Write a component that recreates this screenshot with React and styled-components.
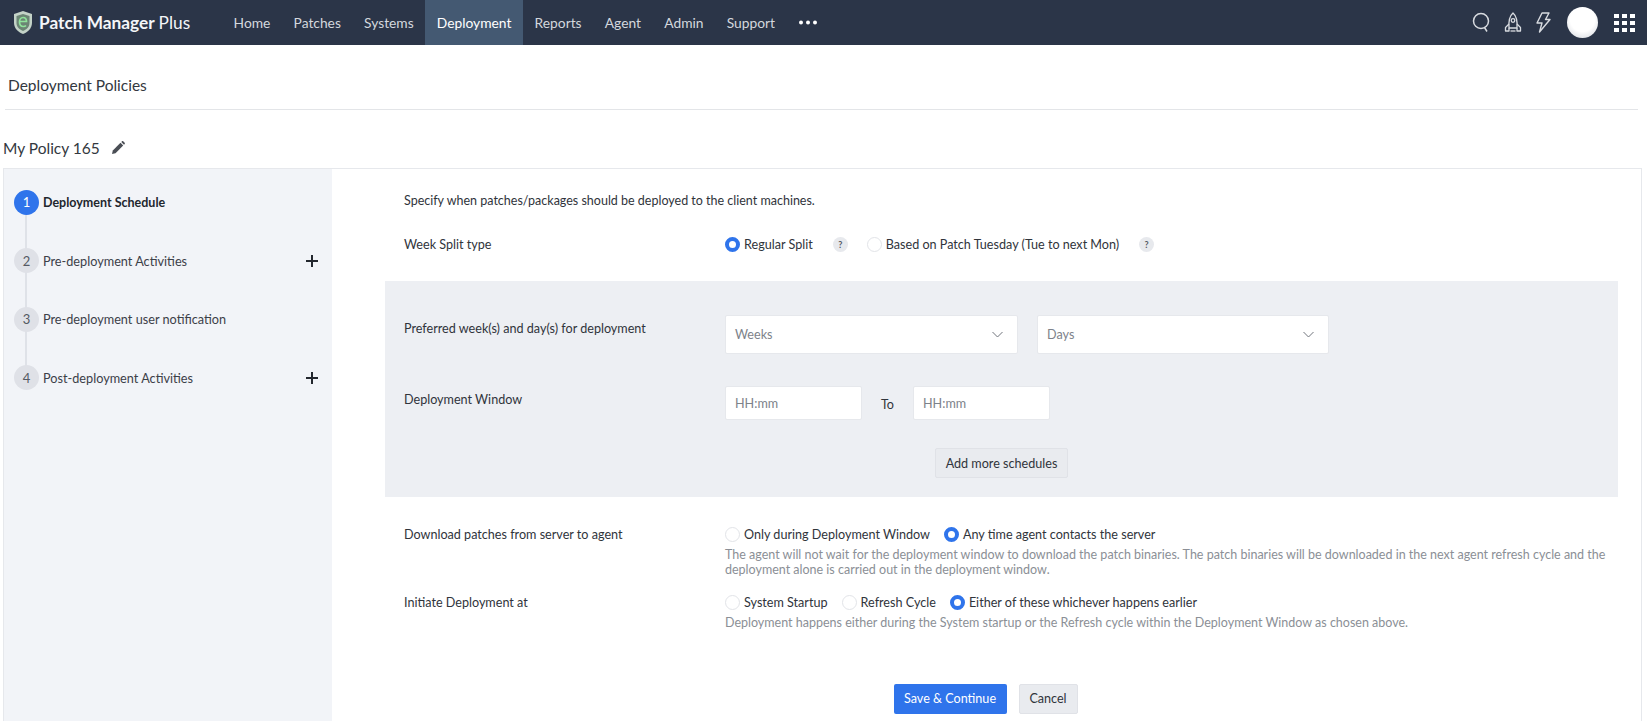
import React from "react";
import styled, { createGlobalStyle } from "styled-components";

const GlobalStyle = createGlobalStyle`
	html, body {
		margin: 0;
		height: 721px;
		overflow: hidden;
		background: #fff;
		font-family: Lato, "Liberation Sans", sans-serif;
		color: #2b2f36;
	}
`;

const TopBar = styled.header`
	height: 45px;
	background: #2b3548;
	display: flex;
	align-items: stretch;
	color: #e6e9ee;
`;

const Brand = styled.div`
	display: flex;
	align-items: center;
	gap: 6px;
	width: 222px;
	padding-left: 13px;
	box-sizing: border-box;
	font-size: 17.3px;
	font-weight: 700;
	color: #f4f6f8;
	span { font-weight: 400; }
`;

const NavItem = styled.div`
	display: flex;
	align-items: center;
	padding: 0 11.6px;
	font-size: 13.8px;
	color: ${p => p.$active ? "#fff" : "#d4d8de"};
	background: ${p => p.$active ? "#445972" : "transparent"};
`;

const TopIcons = styled.div`
	margin-left: auto;
	display: flex;
	align-items: center;
	gap: 13px;
	padding-right: 12px;
`;

const Avatar = styled.div`
	width: 31px;
	height: 31px;
	border-radius: 50%;
	background: radial-gradient(circle at 50% 40%, #fff 50%, #cfd3da 100%);
	margin: 0 3px 0 3px;
`;

const PageTitle = styled.div`
	margin: 0 9px 0 5px;
	padding: 16px 0 0 3px;
	height: 65px;
	display: flex;
	align-items: center;
	font-size: 15.5px;
	color: #333840;
	border-bottom: 1px solid #e3e5e8;
	box-sizing: border-box;
`;

const PolicyRow = styled.div`
	display: flex;
	align-items: center;
	gap: 11px;
	height: 58px;
	padding: 17px 0 0 3px;
	box-sizing: border-box;
	font-size: 15.5px;
	color: #333840;
`;

const Card = styled.div`
	margin: 0 5px 0 3px;
	height: 560px;
	border: 1px solid #e6e8ec;
	border-bottom: 0;
	display: flex;
`;

const Steps = styled.aside`
	width: 328px;
	flex: none;
	background: #f2f4f8;
	padding-top: 4px;
	box-sizing: border-box;
	display: flex;
	flex-direction: column;
`;

const Step = styled.div`
	height: 58.5px;
	display: flex;
	align-items: center;
	padding-left: 10px;
	gap: 4px;
	font-size: ${p => p.$active ? 12.5 : 12.7}px;
	font-weight: ${p => p.$active ? 700 : 400};
	color: ${p => p.$active ? "#23272e" : "#3c4048"};
	position: relative;
	&:not(:last-child)::after {
		content: "";
		position: absolute;
		left: 21px;
		top: 40px;
		height: 40px;
		width: 2px;
		background: #dfe2e8;
	}
`;

const StepNo = styled.div`
	width: 25px;
	height: 25px;
	border-radius: 50%;
	flex: none;
	display: flex;
	align-items: center;
	justify-content: center;
	font-size: 13px;
	font-weight: 400;
	position: relative;
	z-index: 1;
	color: ${p => p.$active ? "#fff" : "#555a63"};
	background: ${p => p.$active ? "#2f74eb" : "#dfe1e7"};
`;

const Plus = styled.svg`
	margin-left: auto;
	margin-right: 14px;
	width: 12px;
	height: 12px;
`;

const Content = styled.main`
	flex: 1;
	min-width: 0;
	padding-top: 23px;
`;

const Intro = styled.div`
	margin-left: 72px;
	font-size: 12.5px;
	height: 18px;
	line-height: 18px;
	color: #30343b;
`;

const Row = styled.div`
	display: flex;
	padding-left: 72px;
	font-size: 12.6px;
	color: #30343b;
	margin-top: ${p => p.$top || 0}px;
`;

const Label = styled.div`
	width: 321px;
	flex: none;
	line-height: 18px;
	padding-top: 1px;
`;

const Radios = styled.div`
	display: flex;
	align-items: center;
	height: 18px;
`;

const RadioWrap = styled.div`
	display: flex;
	align-items: center;
	gap: 4px;
	margin-right: ${p => p.$gap || 14}px;
	white-space: nowrap;
`;

const RadioDot = styled.div`
	width: 15px;
	height: 15px;
	border-radius: 50%;
	box-sizing: border-box;
	flex: none;
	background: #fff;
	border: ${p => p.$on ? "4px solid #2f74eb" : "1px solid #e2e4e8"};
`;

const Help = styled.div`
	width: 15px;
	height: 15px;
	border-radius: 50%;
	background: #e7e9ed;
	font-size: 9px;
	font-weight: 700;
	color: #555a63;
	display: flex;
	align-items: center;
	justify-content: center;
	margin-right: 19px;
`;

const Panel = styled.section`
	margin: 27px 0 0 53px;
	width: 1233px;
	height: 216px;
	background: #edeff3;
	padding: 34px 0 0 19px;
	box-sizing: border-box;
`;

const PanelRow = styled.div`
	display: flex;
	font-size: 12.6px;
	color: #30343b;
	margin-top: ${p => p.$top || 0}px;
`;

const PanelLabel = styled(Label)`
	padding-top: 5px;
`;

const Field = styled.div`
	width: ${p => p.$w}px;
	height: ${p => p.$h}px;
	background: #fff;
	border: 1px solid #e6e8ec;
	border-radius: 2px;
	box-sizing: border-box;
	display: flex;
	align-items: center;
	justify-content: space-between;
	padding: 0 14px 0 9px;
	color: #7d828a;
	font-size: 12.6px;
	margin-right: ${p => p.$gap || 0}px;
`;

const ToText = styled.div`
	width: 51px;
	text-align: center;
	align-self: center;
	color: #30343b;
	padding-top: 3px;
`;

const Ghost = styled.button`
	font: inherit;
	font-size: 12.6px;
	height: 30px;
	color: #30343b;
	background: #e9ebef;
	border: 1px solid #e0e2e7;
	border-radius: 2px;
	padding: 0;
	width: ${p => p.$w}px;
`;

const PanelAction = styled.div`
	margin: 28px 0 0 531px;
`;

const Note = styled.div`
	margin-top: 5px;
	width: 890px;
	font-size: 12.5px;
	line-height: 14.5px;
	color: #8b8f96;
`;

const Actions = styled.div`
	margin-top: 53px;
	padding-right: 2px;
	display: flex;
	justify-content: center;
	gap: 12px;
`;

const Primary = styled.button`
	font: inherit;
	font-size: 12.6px;
	width: 113px;
	height: 30px;
	color: #fff;
	background: #2f74eb;
	border: 0;
	border-radius: 2px;
	padding: 0;
`;

const NAV = [ "Home", "Patches", "Systems", "Deployment", "Reports", "Agent", "Admin", "Support" ];

const STEPS = [
	{ label: "Deployment Schedule", active: true },
	{ label: "Pre-deployment Activities", plus: true },
	{ label: "Pre-deployment user notification" },
	{ label: "Post-deployment Activities", plus: true }
];

const Shield = () =>
	<svg width="20" height="25" viewBox="0 0 20 25">
		<path d="M10 1 L19 4 V13 C19 18 15 22 10 24 C5 22 1 18 1 13 V4 Z" fill="#c3d2c7" />
		<path d="M10 4 L16.5 6 V13 C16.5 16.5 14 19.5 10 21 C6 19.5 3.5 16.5 3.5 13 V6 Z" fill="#6b8474" />
		<path d="M6.5 11.5 H13.5 C13.5 9 12 7.5 10 7.5 C8 7.5 6.5 9.5 6.5 12 C6.5 15 8.5 16.5 10.5 16.5 C11.5 16.5 12.5 16 13 15.5" fill="none" stroke="#8fe39b" strokeWidth="1.7" />
	</svg>;

const Dots = () =>
	<svg width="20" height="5" viewBox="0 0 20 5">
		<circle cx="3" cy="2.5" r="2" fill="#fff" />
		<circle cx="10" cy="2.5" r="2" fill="#fff" />
		<circle cx="17" cy="2.5" r="2" fill="#fff" />
	</svg>;

const SearchIcon = () =>
	<svg width="19" height="21" viewBox="0 0 19 21" fill="none" stroke="#d8dbe0" strokeWidth="1.5">
		<circle cx="9" cy="9" r="7.5" />
		<path d="M12.5 15.5 L15 19.5" />
	</svg>;

const RocketIcon = () =>
	<svg width="18" height="22" viewBox="0 0 18 22" fill="none" stroke="#d8dbe0" strokeWidth="1.3" strokeLinejoin="round">
		<path d="M9 1 C12.5 4 13.5 9 13 16 H5 C4.5 9 5.5 4 9 1 Z" />
		<circle cx="9" cy="8.5" r="1.8" />
		<path d="M5 12 L1.5 15.5 V19 H5 V16 M13 12 L16.5 15.5 V19 H13 V16" />
		<path d="M6.5 19 H11.5" />
	</svg>;

const BoltIcon = () =>
	<svg width="16" height="21" viewBox="0 0 16 21" fill="none" stroke="#d8dbe0" strokeWidth="1.4" strokeLinejoin="round">
		<path d="M7 1 H14 L10.5 7.5 H15 L4.5 20 L7 11 H2 Z" />
	</svg>;

const GridIcon = () =>
	<svg width="21" height="19" viewBox="0 0 21 19" fill="#fff">
		{[ 0, 7, 14 ].map( y => [ 0, 8, 16 ].map( x =>
			<rect key={`${x}-${y}`} x={x} y={y + 1} width="5" height="4" />
		))}
	</svg>;

const Pencil = () =>
	<svg width="14" height="14" viewBox="0 0 14 14" fill="#4a4e55">
		<path d="M1 13 L1.8 9.5 L9.5 1.8 L12.2 4.5 L4.5 12.2 Z" />
		<path d="M10.3 1 L11 .3 C11.4 0 11.8 0 12.2 .3 L13.7 1.8 C14 2.2 14 2.6 13.7 3 L13 3.7 Z" />
	</svg>;

const Chevron = () =>
	<svg width="11" height="7" viewBox="0 0 11 7" fill="none" stroke="#70757d" strokeWidth="1">
		<path d="M.5 1 L5.5 6 L10.5 1" />
	</svg>;

const Radio = ({ on, gap, children }) =>
	<RadioWrap $gap={gap}>
		<RadioDot $on={on} />
		{children}
	</RadioWrap>;

const App = () =>
	<>
		<GlobalStyle />
		<TopBar>
			<Brand><Shield /><div>Patch Manager <span>Plus</span></div></Brand>
			{NAV.map( name =>
				<NavItem key={name} $active={name === "Deployment"}>{name}</NavItem>
			)}
			<NavItem><Dots /></NavItem>
			<TopIcons>
				<SearchIcon />
				<RocketIcon />
				<BoltIcon />
				<Avatar />
				<GridIcon />
			</TopIcons>
		</TopBar>
		<PageTitle>Deployment Policies</PageTitle>
		<PolicyRow>My Policy 165 <Pencil /></PolicyRow>
		<Card>
			<Steps>
				{STEPS.map(( step, index ) =>
					<Step key={step.label} $active={step.active}>
						<StepNo $active={step.active}>{index + 1}</StepNo>
						{step.label}
						{step.plus &&
							<Plus viewBox="0 0 12 12">
								<path d="M6 0 V12 M0 6 H12" stroke="#23272e" strokeWidth="2" />
							</Plus>
						}
					</Step>
				)}
			</Steps>
			<Content>
				<Intro>Specify when patches/packages should be deployed to the client machines.</Intro>
				<Row $top={25}>
					<Label>Week Split type</Label>
					<Radios>
						<Radio on gap={20}>Regular Split</Radio>
						<Help>?</Help>
						<Radio gap={20}>Based on Patch Tuesday (Tue to next Mon)</Radio>
						<Help>?</Help>
					</Radios>
				</Row>
				<Panel>
					<PanelRow>
						<PanelLabel>Preferred week(s) and day(s) for deployment</PanelLabel>
						<Field $w={293} $h={39} $gap={19}>Weeks <Chevron /></Field>
						<Field $w={292} $h={39}>Days <Chevron /></Field>
					</PanelRow>
					<PanelRow $top={32}>
						<PanelLabel>Deployment Window</PanelLabel>
						<Field $w={137} $h={34}>HH:mm</Field>
						<ToText>To</ToText>
						<Field $w={137} $h={34}>HH:mm</Field>
					</PanelRow>
					<PanelAction>
						<Ghost $w={133}>Add more schedules</Ghost>
					</PanelAction>
				</Panel>
				<Row $top={28}>
					<Label>Download patches from server to agent</Label>
					<div>
						<Radios>
							<Radio>Only during Deployment Window</Radio>
							<Radio on>Any time agent contacts the server</Radio>
						</Radios>
						<Note>The agent will not wait for the deployment window to download the patch binaries. The patch binaries will be downloaded in the next agent refresh cycle and the deployment alone is carried out in the deployment window.</Note>
					</div>
				</Row>
				<Row $top={16}>
					<Label>Initiate Deployment at</Label>
					<div>
						<Radios>
							<Radio>System Startup</Radio>
							<Radio>Refresh Cycle</Radio>
							<Radio on>Either of these whichever happens earlier</Radio>
						</Radios>
						<Note>Deployment happens either during the System startup or the Refresh cycle within the Deployment Window as chosen above.</Note>
					</div>
				</Row>
				<Actions>
					<Primary>Save &amp; Continue</Primary>
					<Ghost $w={59}>Cancel</Ghost>
				</Actions>
			</Content>
		</Card>
	</>;

export default App;
